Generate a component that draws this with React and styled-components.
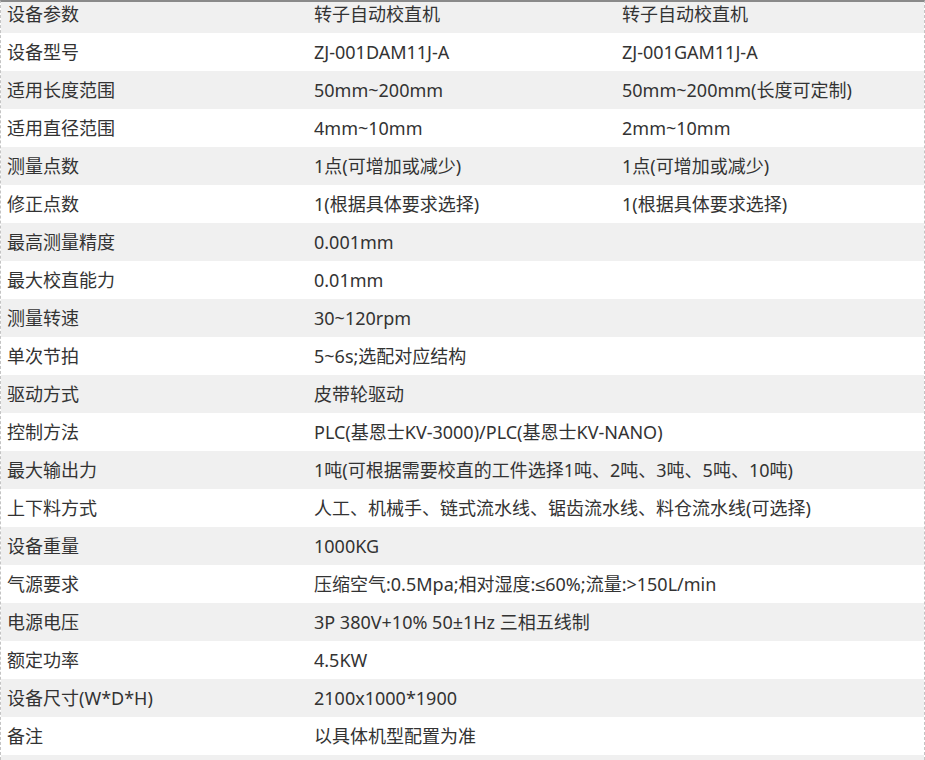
import React from 'react';
import styled, { createGlobalStyle } from 'styled-components';

const GlobalStyle = createGlobalStyle`
  html, body {
    margin: 0;
    padding: 0;
    background: #fff;
  }
  body {
    font-family: "Noto Sans", "Liberation Sans", "Noto Sans CJK SC", sans-serif;
  }
`;

const rows = [
  ['设备参数', '转子自动校直机', '转子自动校直机'],
  ['设备型号', 'ZJ-001DAM11J-A', 'ZJ-001GAM11J-A'],
  ['适用长度范围', '50mm~200mm', '50mm~200mm(长度可定制)'],
  ['适用直径范围', '4mm~10mm', '2mm~10mm'],
  ['测量点数', '1点(可增加或减少)', '1点(可增加或减少)'],
  ['修正点数', '1(根据具体要求选择)', '1(根据具体要求选择)'],
  ['最高测量精度', '0.001mm'],
  ['最大校直能力', '0.01mm'],
  ['测量转速', '30~120rpm'],
  ['单次节拍', '5~6s;选配对应结构'],
  ['驱动方式', '皮带轮驱动'],
  ['控制方法', 'PLC(基恩士KV-3000)/PLC(基恩士KV-NANO)'],
  ['最大输出力', '1吨(可根据需要校直的工件选择1吨、2吨、3吨、5吨、10吨)'],
  ['上下料方式', '人工、机械手、链式流水线、锯齿流水线、料仓流水线(可选择)'],
  ['设备重量', '1000KG'],
  ['气源要求', '压缩空气:0.5Mpa;相对湿度:≤60%;流量:>150L/min'],
  ['电源电压', '3P 380V+10% 50±1Hz 三相五线制'],
  ['额定功率', '4.5KW'],
  ['设备尺寸(W*D*H)', '2100x1000*1900'],
  ['备注', '以具体机型配置为准'],
  [''],
];

export default function App() {
  return (<>
    <GlobalStyle />
    <Frame>
      <Table>
        <colgroup>
          <col style={{ width: 307 }} />
          <col style={{ width: 308 }} />
          <col />
        </colgroup>
        <tbody>
          {rows.map((r, i) => (
            <Row key={i} $striped={i % 2 === 0}>
              <Cell>{r[0]}</Cell>
              {r.length === 3 ? <>
                <Cell>{r[1]}</Cell>
                <Cell>{r[2]}</Cell>
              </> : <Cell colSpan={2}>{r[1]}</Cell>}
            </Row>
          ))}
        </tbody>
      </Table>
    </Frame>
  </>);
}

const Frame = styled.div`
  height: 758px;
  overflow: hidden;
  border-top: 2px solid #8a8a8a;
  border-left: 1px dashed #c4c4c4;
  border-right: 1px dashed #c4c4c4;
  box-sizing: content-box;
  width: 923px;
`;

const Table = styled.table`
  width: 100%;
  margin-top: -7px;
  border-collapse: collapse;
  table-layout: fixed;
`;

const Row = styled.tr`
  background: ${p => p.$striped ? '#f0f0f0' : '#ffffff'};
`;

const Cell = styled.td`
  height: 38px;
  padding: 0 6px;
  font-size: 18px;
  line-height: 24px;
  color: #333;
  white-space: nowrap;
  vertical-align: middle;
`;
